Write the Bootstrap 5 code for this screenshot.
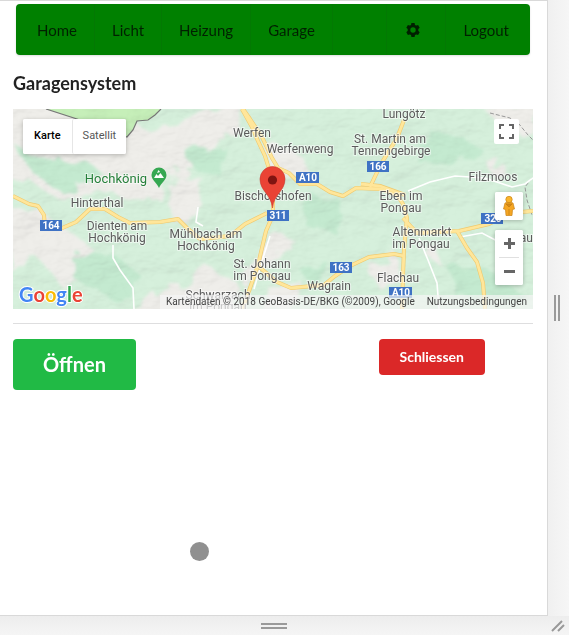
<!DOCTYPE html>
<html lang="de">
<head>
<meta charset="utf-8">
<meta name="viewport" content="width=device-width, initial-scale=1">
<title>Garagensystem</title>
<link href="https://cdn.jsdelivr.net/npm/bootstrap@5.3.0/dist/css/bootstrap.min.css" rel="stylesheet">
<style>
body { font-family: Lato, sans-serif; font-size: 14px; color: rgba(0,0,0,.87); background: #f4f4f4; }
.viewport-pane { background: #fff; border: solid #d9d9d9; border-width: 1px 1px 1px 0; padding: 3px 14px 0 13px; }
.main-menu { background: #008000; border-radius: 4px; margin: 0 3px; padding: 0 4px; height: 51px; box-shadow: 0 1px 2px rgba(34,36,38,.15); }
.main-menu .nav-link { font-size: 15px; line-height: 16px; color: rgba(0,0,0,.75); padding: 0 17px; height: 51px; display: flex; align-items: center; border-right: 1px solid rgba(34,36,38,.08); }
.main-menu .nav-link:hover { background: rgba(0,0,0,.05); }
.main-menu .nav-gear { padding: 0 24px 0 18px; border-left: 1px solid rgba(34,36,38,.08); }
.main-menu .nav-out { border-right: 0; }
.page-title { font-size: 18px; line-height: 24px; margin: 16px 0 14px; font-weight: 700; }
.map-box { height: 200px; font-family: Roboto, sans-serif; background: #cfe9d3; }
.map-art { width: 100%; height: 100%; display: block; }
.ctl-group { background: #fff; border-radius: 2px; box-shadow: 0 1px 4px rgba(0,0,0,.25); }
.map-type { left: 10px; top: 10px; height: 35px; }
.map-ctl { background: #fff; border: 0; border-radius: 2px; color: #565656; font-size: 11px; padding: 0 11px; }
.map-type .map-ctl + .map-ctl { border-left: 1px solid #e6e6e6; padding: 0 10px; }
.map-type .on { color: #000; font-weight: 500; }
.map-full { right: 14px; top: 10px; width: 25px; height: 25px; padding: 0; }
.map-side { right: 10px; top: 83px; width: 28px; }
.map-side .map-ctl { width: 28px; height: 28px; padding: 0; display: flex; align-items: center; justify-content: center; }
.zoom-set { margin-top: 10px; }
.zoom-line { height: 1px; margin: 0 4px; background: #e0e0e0; }
.map-side .zoom-set .map-ctl { height: 27px; }
.map-credit { right: 0; bottom: 0; font-size: 10px; line-height: 14px; color: #444; background: rgba(245,245,245,.7); }
.map-credit a { color: #444; text-decoration: none; }
.map-credit > * { padding: 0 6px; }
.rule { margin: 14px 0 15px; border-color: #222426; opacity: .15; }
.btn-door { color: #fff; font-weight: 700; border: 0; border-radius: 4px; }
.btn-door:hover { color: #fff; }
.btn-up { background: #21ba45; font-size: 20px; line-height: 21px; padding: 15px 30px; }
.btn-down { background: #db2828; font-size: 14px; line-height: 14px; padding: 11px 21px; margin-right: 48px; }
.btn-up:hover { background: #16ab39; }
.btn-down:hover { background: #d01919; }
.touch-dot { left: 190px; top: 542px; width: 19px; height: 19px; background: #909090; }
.grip-side { width: 21px; background: linear-gradient(90deg, #f0f0f0, #f6f6f6); }
.grip-foot { height: 19px; background: linear-gradient(#ededed, #f5f5f5); }
.bars-v { width: 6px; height: 26px; margin-right: 4px; border: solid #9a9a9a; border-width: 0 2px; }
.bars-h { width: 26px; height: 6px; border: solid #9a9a9a; border-width: 2px 0; }
.place { font-size: 12px; fill: #5b5b5b; stroke: #fff; stroke-opacity: .55; stroke-width: 2px; paint-order: stroke; }
.shield { font-size: 10px; font-weight: 700; fill: #fff; }
.brand { font: 700 20px Lato, sans-serif; stroke: #fff; stroke-width: 2px; paint-order: stroke; }
</style>
<script src="https://cdn.jsdelivr.net/npm/bootstrap@5.3.0/dist/js/bootstrap.bundle.min.js"></script>
</head>
<body class="d-flex flex-column vh-100 overflow-hidden position-relative">
<div class="d-flex flex-grow-1">
  <main class="viewport-pane flex-grow-1">
    <nav class="main-menu d-flex overflow-hidden" aria-label="Hauptmenü">
      <a class="nav-link" href="#home">Home</a>
      <a class="nav-link" href="#licht">Licht</a>
      <a class="nav-link" href="#heizung">Heizung</a>
      <a class="nav-link" href="#garage">Garage</a>
      <a class="nav-link nav-gear ms-auto" href="#settings" aria-label="Einstellungen">
        <svg width="16" height="16" viewBox="0 0 16 16" fill="currentColor" fill-rule="evenodd"><path d="M6.4 1h3.2l.4 1.9 1.2.7 1.9-.6 1.6 2.7-1.4 1.4v1.7l1.4 1.4-1.6 2.8-1.9-.6-1.2.7-.4 1.9H6.4L6 13.1l-1.2-.7-1.9.6-1.6-2.8 1.4-1.4V7.100L1.300 5.700 2.900 3l1.900.600L6 2.900zM8 5.300a2.700 2.700 0 1 0 0 5.400 2.700 2.700 0 0 0 0-5.400z"/></svg>
      </a>
      <a class="nav-link nav-out" href="#logout">Logout</a>
    </nav>

    <h1 class="page-title">Garagensystem</h1>

    <section class="map-box position-relative overflow-hidden" aria-label="Karte">
      <svg class="map-art" viewBox="13 109 520 200" preserveAspectRatio="xMidYMid slice">
        <defs>
          <filter id="soft" x="-20%" y="-20%" width="140%" height="140%"><feTurbulence type="fractalNoise" baseFrequency=".045" numOctaves="3" seed="4"/><feDisplacementMap in="SourceGraphic" scale="26"/><feGaussianBlur stdDeviation="1.800"/></filter>
          <filter id="relief" x="0" y="0" width="100%" height="100%"><feTurbulence type="fractalNoise" baseFrequency=".025 .045" numOctaves="4" seed="8"/><feDiffuseLighting surfaceScale="7" lighting-color="#fff"><feDistantLight azimuth="225" elevation="58"/></feDiffuseLighting></filter>
        </defs>
        <rect x="13" y="109" width="520" height="200" fill="#d6f0dc"/>
        <g filter="url(#soft)" fill="#efeeea">
          <path d="M0 100H90L150 130 235 100 240 125 190 165 150 205 105 190 60 200 30 180 0 185z"/>
          <path d="M5 205L45 215 95 250 65 290 40 260 10 270z"/>
          <path d="M165 290L205 265 240 285 235 315H130z"/>
          <path d="M180 175L205 180 200 205 175 225 165 200z"/>
          <path d="M262 140L300 155 310 175 275 180z"/>
          <path d="M480 105H535V135L500 125z"/>
          <path d="M275 232L295 240 280 260 265 270 245 290 250 260z"/>
          <path d="M370 265L395 250 400 275 380 290z"/>
          <path d="M485 160L505 165 500 185z"/>
          <path d="M270 285L300 280 290 310H260z"/>
          <path d="M415 245L440 245 440 265z"/>
        </g>
        <g filter="url(#soft)" fill="#c4ead0">
          <path d="M15 145L60 165 85 160 105 175 60 190 30 170z"/>
          <path d="M180 145L230 150 220 175 195 170z"/>
          <path d="M75 250L115 255 145 280 115 300 70 275z"/>
          <path d="M305 190L345 205 335 235 305 225z"/>
          <path d="M430 130L480 145 460 170 415 160z"/>
          <path d="M300 270L330 265 320 295z"/>
          <path d="M450 270L480 265 525 295 460 300z"/>
        </g>
        <path d="M46 109L77 119 127 137 133 130 137 121 148 120 155 115 161 109z" fill="#c6efb9"/>
        <rect x="13" y="109" width="520" height="200" filter="url(#relief)" opacity=".12" style="mix-blend-mode:multiply"/>
        <path d="M46 109L77 119 127 137 133 130 137 121 148 120 155 115 161 109" fill="none" stroke="#777" stroke-width="1.200"/>
        <path d="M490 113L510 118 519 124 528 135 533 140M532 178L525 187 527 200 532 215" fill="none" stroke="#999" stroke-dasharray="4 2"/>
        <g fill="none" stroke="#fff" stroke-width="1.600">
          <path d="M113 245V258L120 270 133 288 134 309"/>
          <path d="M408 191L430 182 455 176 485 178 512 187 525 184 533 178"/>
          <path d="M198 207L196 222 203 226M270 236L263 258 254 289M419 238L428 260 437 283 439 309M460 237L482 233 499 242 520 240"/>
        </g>
        <g fill="none" stroke="#efc96e" stroke-width="4" stroke-linejoin="round">
          <path id="r1" d="M13 196L29 204 38 206 44 215 45 228 60 229 76 222 90 209 105 209 118 217 130 223 160 222 178 219 187 228 200 239 230 236 245 224 267 213"/>
          <path id="r2" d="M242 109L252 127 258 141 265 156 270 172 273 195 273 215 266 231 258 265 248 294 242 309M243 109L250 119 262 137 272 158 278 168 289 173 300 184 317 184 330 192 343 196 356 188 381 189 397 195 403 204 407 218 404 249 403 275 402 309"/>
          <path id="r3" d="M404 120L397 138 381 164 370 187M361 184L380 186 405 195M258 266L277 282 291 288 324 285 335 276 350 266 369 257 394 254 404 256M403 218L417 233 459 231 489 224 510 213 533 211M457 231L467 248 477 262 483 283 485 309"/>
        </g>
        <g fill="none" stroke="#ffe69a" stroke-width="2.800"><use href="#r1"/><use href="#r2"/><use href="#r3"/></g>
        <g fill="#3f72c4">
          <path d="M40 220h22v11H40zM296 172h23v11h-23zM367 161h22v11h-22zM267 210h22v11h-22zM330 262h22v11h-22zM481 213h22v11h-22zM389 287h23v11h-23z"/>
        </g>
        <g class="shield" text-anchor="middle">
          <text x="51" y="229">164</text><text x="308" y="181">A10</text><text x="378" y="170">166</text><text x="278" y="219">311</text><text x="341" y="271">163</text><text x="493" y="222">320</text><text x="401" y="296">A10</text>
        </g>
        <g class="place" text-anchor="middle">
          <text x="252" y="137">Werfen</text><text x="300" y="153">Werfenweng</text>
          <text x="404" y="118">Lungötz</text>
          <text x="390" y="143">St. Martin am</text><text x="391" y="155">Tennengebirge</text>
          <text x="493" y="181">Filzmoos</text><text x="273" y="200">Bischofshofen</text>
          <text x="401" y="200">Eben im</text><text x="401" y="212">Pongau</text>
          <text x="97" y="207">Hinterthal</text>
          <text x="117" y="230">Dienten am</text><text x="117" y="242">Hochkönig</text>
          <text x="206" y="238">Mühlbach am</text><text x="206" y="250">Hochkönig</text>
          <text x="262" y="268">St. Johann</text><text x="262" y="280">im Pongau</text>
          <text x="422" y="236">Altenmarkt</text><text x="421" y="248">im Pongau</text>
          <text x="329" y="290">Wagrain</text><text x="398" y="282">Flachau</text>
          <text x="218" y="299">Schwarzach</text><text x="218" y="311">im Pongau</text>
          <text x="533" y="242" text-anchor="end">au</text>
          <text x="116" y="183" style="font-size:13px;fill:#27803b">Hochkönig</text>
        </g>
        <path d="M159 188C157 183 151.500 180 151.500 175a7.500 7.500 0 0 1 15 0C166.500 180 161 183 159 188z" fill="#36a852"/>
        <path d="M154 178L156.500 174 158 176 160.500 173 164 178zM157 173l1.500-3 1.500 2z" fill="#fff"/>
        <path d="M272.500 208C271 194 260 191 260 179a12.500 12.500 0 0 1 25 0C285 191 274 194 272.500 208z" fill="#ea4335" stroke="#c83a30" stroke-width=".6"/>
        <circle cx="272.500" cy="180" r="4.600" fill="#811411"/>
        <text class="brand" x="19" y="302"><tspan fill="#4285f4">G</tspan><tspan fill="#ea4335">o</tspan><tspan fill="#fbbc05">o</tspan><tspan fill="#4285f4">g</tspan><tspan fill="#34a853">l</tspan><tspan fill="#ea4335">e</tspan></text>
      </svg>

      <div class="map-type ctl-group position-absolute d-flex">
        <button class="map-ctl on" type="button">Karte</button>
        <button class="map-ctl" type="button">Satellit</button>
      </div>
      <button class="map-ctl map-full position-absolute d-flex align-items-center justify-content-center" type="button" aria-label="Vollbild">
        <svg width="15" height="15" viewBox="0 0 15 15" fill="none" stroke="#666" stroke-width="2"><path d="M1 5V1h4M10 1h4v4M14 10v4h-4M5 14H1v-4"/></svg>
      </button>
      <div class="map-side position-absolute">
        <div class="ctl-group">
          <button class="map-ctl" type="button" aria-label="Street View">
            <svg width="14" height="22" viewBox="0 0 14 22"><path d="M3 8q4-2 8 0l1.500 6-2 .5-.5 6H4l-.500-6-2-.5z" fill="#f5a623" stroke="#c98316" stroke-width=".7"/><path d="M4 9h6l-3 3zM7 14v6" fill="#d58b18" stroke="#c27b12" stroke-width=".7"/><circle cx="7" cy="4.500" r="3.200" fill="#fbb52b" stroke="#c98316" stroke-width=".7"/></svg>
          </button>
        </div>
        <div class="zoom-set ctl-group">
          <button class="map-ctl" type="button" aria-label="Vergrößern"><svg width="11" height="11" viewBox="0 0 11 11" stroke="#666" stroke-width="3"><path d="M0 5.500h11M5.500 0v11"/></svg></button>
          <div class="zoom-line"></div>
          <button class="map-ctl" type="button" aria-label="Verkleinern"><svg width="11" height="11" viewBox="0 0 11 11" stroke="#666" stroke-width="3"><path d="M0 5.500h11"/></svg></button>
        </div>
      </div>
      <div class="map-credit position-absolute d-flex">
        <span>Kartendaten © 2018 GeoBasis-DE/BKG (©2009), Google</span>
        <a href="#terms">Nutzungsbedingungen</a>
      </div>
    </section>

    <hr class="rule">

    <div class="d-flex justify-content-between align-items-start">
      <button class="btn btn-door btn-up" type="button">Öffnen</button>
      <button class="btn btn-door btn-down" type="button">Schliessen</button>
    </div>
  </main>
  <div class="grip-side d-flex align-items-center justify-content-center"><span class="bars-v"></span></div>
</div>
<div class="grip-foot d-flex align-items-center">
  <div class="flex-grow-1 d-flex justify-content-center"><span class="bars-h"></span></div>
  <div class="d-flex justify-content-center"><svg width="21" height="19" viewBox="0 0 21 19" fill="none" stroke="#999" stroke-width="2"><path d="M4 15L14 5M10 15l6-6"/></svg></div>
</div>
<span class="touch-dot position-absolute rounded-circle"></span>
</body>
</html>
